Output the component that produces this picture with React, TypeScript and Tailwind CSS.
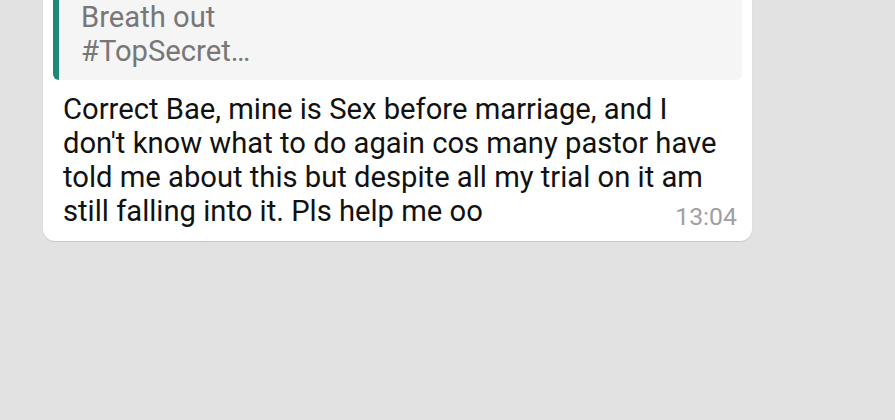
export default function App() {
  return (
    <div className="h-[420px] w-[895px] overflow-hidden bg-[#e2e2e2] font-['Roboto',sans-serif]">
      <div className="ml-[43px] mt-[-40px] w-[709px] rounded-b-[12px] bg-white px-[10px] pt-[10px] pb-[13px] shadow-[0_1px_1px_rgba(0,0,0,0.12)]">
        <div className="flex rounded-[6px] bg-[#f5f5f5]">
          <div className="w-[6px] shrink-0 rounded-l-[6px] bg-[#1e8a76]" />
          <div className="pl-[22px] pt-[30px] pb-[12px] text-[29.2px] leading-[34px] text-[#777777]">
            Breath out
            <br />
            #TopSecret…
          </div>
        </div>
        <div className="px-[10px] pt-[12px] text-[29.2px] leading-[34px] text-[#111111]">
          Correct Bae, mine is Sex before marriage, and I
          <br />
          don't know what to do again cos many pastor have
          <br />
          told me about this but despite all my trial on it am
          <br />
          <span>still falling into it. Pls help me oo</span>
          <span className="float-right mt-[8px] mr-[-5px] text-[24.8px] leading-[30px] text-[#a0a0a0]">13:04</span>
        </div>
      </div>
    </div>
  );
}
